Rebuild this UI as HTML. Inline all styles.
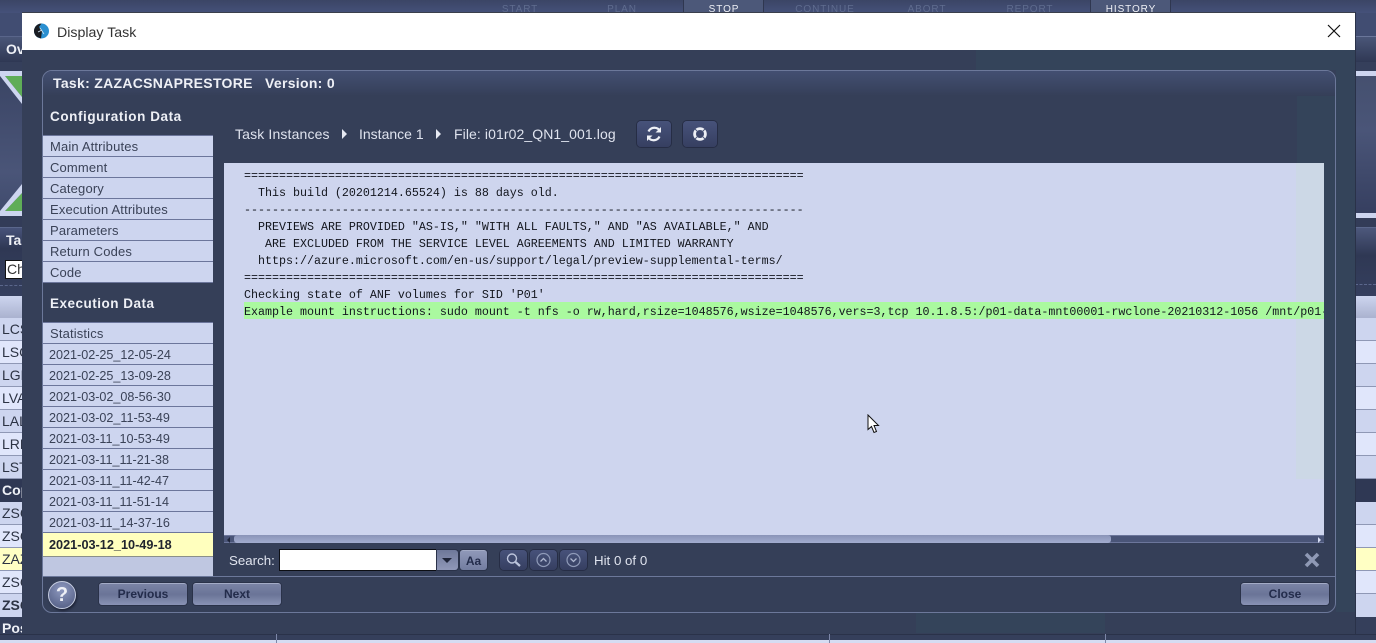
<!DOCTYPE html>
<html>
<head>
<meta charset="utf-8">
<style>
html,body{margin:0;padding:0;width:1376px;height:643px;overflow:hidden;background:#353f5b;}
*{box-sizing:border-box;}
body{position:relative;font-family:"Liberation Sans",sans-serif;}
.a{position:absolute;}
.t{position:absolute;white-space:nowrap;}
.top{font-size:10px;letter-spacing:.9px;color:#5f6c8f;top:4px;line-height:11px;text-align:center;}
.bg-row{position:absolute;height:23px;border-bottom:1px solid #8f98b5;font-size:14px;line-height:22px;color:#2c3344;overflow:hidden;padding-left:2px;}
.nav{position:absolute;left:43px;width:170px;height:21px;background:#cdd5ef;border-bottom:1px solid #6c769b;font-size:13px;line-height:22px;color:#3a4257;padding-left:7px;letter-spacing:.15px;white-space:nowrap;}
.nav.d{font-size:12.6px;letter-spacing:0;padding-left:6px;}
.log{position:absolute;left:244px;font-family:"Liberation Mono",monospace;font-size:11.67px;line-height:17px;height:17px;color:#12151d;white-space:pre;}
.btn{position:absolute;background:linear-gradient(#7a83a5,#6a7497 50%,#8a93b5);border-radius:3px;box-shadow:0 0 0 1px #2a3249;border-top:1px solid #a3abc6;color:#232c4b;font-weight:bold;font-size:12px;text-align:center;line-height:20px;}
.ib{position:absolute;background:linear-gradient(#47527a,#363f61);border-radius:4px;box-shadow:0 0 0 1px #262d45;}
</style>
</head>
<body>
<!-- background app: top bar -->
<div class="a" style="left:0;top:0;width:1376px;height:13px;background:linear-gradient(#3b4565,#45517a);"></div>
<div class="a" style="left:683px;top:0;width:81px;height:13px;background:#4c5879;border-left:1px solid #2f3750;border-right:1px solid #2f3750;"></div>
<div class="a" style="left:1090px;top:0;width:81px;height:13px;background:#4c5879;border-left:1px solid #2f3750;border-right:1px solid #2f3750;"></div>
<div class="t top" style="left:490px;width:60px;">START</div>
<div class="t top" style="left:592px;width:60px;">PLAN</div>
<div class="t top" style="left:694px;width:60px;color:#eef0f6;">STOP</div>
<div class="t top" style="left:795px;width:60px;">CONTINUE</div>
<div class="t top" style="left:897px;width:60px;">ABORT</div>
<div class="t top" style="left:1000px;width:60px;">REPORT</div>
<div class="t top" style="left:1101px;width:60px;color:#eef0f6;">HISTORY</div>

<!-- left strip -->
<div class="a" style="left:0;top:13px;width:22px;height:24px;background:#414d72;"></div>
<div class="a" style="left:0;top:36px;width:22px;height:26px;background:linear-gradient(#4a5678,#2f3854);border-top:1px solid #59658a;"></div>
<div class="t" style="left:6px;top:41px;font-size:14px;font-weight:bold;color:#eef0f6;line-height:16px;width:16px;overflow:hidden;">Ov</div>
<div class="a" style="left:0;top:62px;width:22px;height:9px;background:#353f5b;"></div>
<div class="a" style="left:0;top:71px;width:22px;height:145px;background:linear-gradient(#3a4464,#4a5578 70%,#3f4a6c);"></div>
<svg class="a" style="left:0;top:71px;" width="22" height="145" viewBox="0 0 22 145">
<rect x="0" y="0" width="22" height="5" fill="#cdd5ef"/>
<polygon points="5,5 22,5 22,26" fill="#5fad57"/>
<polygon points="0,5 5,5 22,26 22,33" fill="#cdd5ef"/>
<rect x="0" y="140" width="22" height="5" fill="#cdd5ef"/>
<polygon points="5,140 22,140 22,122" fill="#5fad57"/>
<polygon points="0,140 5,140 22,122 22,113" fill="#cdd5ef"/>
</svg>
<div class="a" style="left:0;top:216px;width:22px;height:11px;background:#333c58;"></div>
<div class="a" style="left:0;top:227px;width:22px;height:69px;background:linear-gradient(#48537a,#2f3854 30%,#353f5e);border-top:1px solid #5b678c;"></div>
<div class="t" style="left:6px;top:232px;font-size:14px;font-weight:bold;color:#eef0f6;line-height:16px;width:16px;overflow:hidden;">Ta</div>
<div class="a" style="left:5px;top:260px;width:17px;height:19px;background:#fff;border:1px solid #111;border-right:0;font-size:14px;line-height:17px;color:#333;padding-left:1px;overflow:hidden;">Ch</div>
<div class="a" style="left:0;top:285px;width:22px;border-top:1px dashed #5b678c;"></div>
<div class="a" style="left:0;top:296px;width:22px;height:22px;background:linear-gradient(#cdd5ef,#aab2cf);"></div>
<div class="bg-row" style="left:0;top:318px;width:22px;background:#cdd5ef;">LCS</div>
<div class="bg-row" style="left:0;top:341px;width:22px;background:#e0e6fb;">LSC</div>
<div class="bg-row" style="left:0;top:364px;width:22px;background:#cdd5ef;">LGR</div>
<div class="bg-row" style="left:0;top:387px;width:22px;background:#e0e6fb;">LVA</div>
<div class="bg-row" style="left:0;top:410px;width:22px;background:#cdd5ef;">LAL</div>
<div class="bg-row" style="left:0;top:433px;width:22px;background:#e0e6fb;">LRE</div>
<div class="bg-row" style="left:0;top:456px;width:22px;background:#cdd5ef;">LST</div>
<div class="bg-row" style="left:0;top:479px;width:22px;background:#2f3854;color:#eef0f6;font-weight:bold;border:0;">Cop</div>
<div class="bg-row" style="left:0;top:502px;width:22px;background:#cdd5ef;">ZSC</div>
<div class="bg-row" style="left:0;top:525px;width:22px;background:#e0e6fb;">ZSC</div>
<div class="bg-row" style="left:0;top:548px;width:22px;background:#ffffc4;">ZAZ</div>
<div class="bg-row" style="left:0;top:571px;width:22px;background:#e0e6fb;">ZSC</div>
<div class="bg-row" style="left:0;top:594px;width:22px;background:#cdd5ef;font-weight:bold;border:0;">ZSC</div>
<div class="t" style="left:2px;top:620px;font-size:14px;font-weight:bold;color:#eef0f6;line-height:16px;width:20px;overflow:hidden;">Pos</div>

<!-- right strip -->
<div class="a" style="left:1355px;top:13px;width:21px;height:23px;background:#414d72;"></div>
<div class="a" style="left:1355px;top:36px;width:21px;height:26px;background:linear-gradient(#4a5678,#2f3854);border-top:1px solid #6a769a;"></div>
<div class="a" style="left:1355px;top:62px;width:21px;height:9px;background:#353f5b;"></div>
<div class="a" style="left:1355px;top:71px;width:21px;height:5px;background:#cdd5ef;"></div>
<div class="a" style="left:1355px;top:76px;width:21px;height:137px;background:linear-gradient(#45506f,#4a5578 40%,#363f60);"></div>
<div class="a" style="left:1355px;top:213px;width:21px;height:5px;background:#cdd5ef;"></div>
<div class="a" style="left:1355px;top:218px;width:21px;height:9px;background:#333c58;"></div>
<div class="a" style="left:1355px;top:227px;width:21px;height:69px;background:linear-gradient(#4d587c,#2f3854 40%,#353f5e);border-top:1px solid #5b678c;"></div>
<div class="a" style="left:1355px;top:284px;width:21px;border-top:1px dashed #5b678c;"></div>
<div class="a" style="left:1355px;top:296px;width:21px;height:22px;background:linear-gradient(#cdd5ef,#aab2cf);"></div>
<div class="bg-row" style="left:1355px;top:318px;width:21px;background:#cdd5ef;"></div>
<div class="bg-row" style="left:1355px;top:341px;width:21px;background:#e0e6fb;"></div>
<div class="bg-row" style="left:1355px;top:364px;width:21px;background:#cdd5ef;"></div>
<div class="bg-row" style="left:1355px;top:387px;width:21px;background:#e0e6fb;"></div>
<div class="bg-row" style="left:1355px;top:410px;width:21px;background:#cdd5ef;"></div>
<div class="bg-row" style="left:1355px;top:433px;width:21px;background:#e0e6fb;"></div>
<div class="bg-row" style="left:1355px;top:456px;width:21px;background:#cdd5ef;"></div>
<div class="a" style="left:1355px;top:479px;width:21px;height:23px;background:#2f3854;"></div>
<div class="bg-row" style="left:1355px;top:502px;width:21px;background:#cdd5ef;"></div>
<div class="bg-row" style="left:1355px;top:525px;width:21px;background:#e0e6fb;"></div>
<div class="bg-row" style="left:1355px;top:548px;width:21px;background:#ffffc4;"></div>
<div class="bg-row" style="left:1355px;top:571px;width:21px;background:#e0e6fb;"></div>
<div class="a" style="left:1355px;top:594px;width:21px;height:23px;background:#cdd5ef;"></div>
<div class="a" style="left:1355px;top:617px;width:21px;height:23px;background:#353f5b;"></div>

<!-- bottom strip -->
<div class="a" style="left:0;top:634px;width:1376px;height:6px;background:#353f5b;border-top:1px solid #2a3249;"></div>
<div class="a" style="left:0;top:640px;width:1376px;height:3px;background:#d5dcf2;"></div>
<div class="a" style="left:276px;top:633px;width:1px;height:10px;background:#7d87a8;"></div>
<div class="a" style="left:829px;top:633px;width:1px;height:10px;background:#7d87a8;"></div>
<div class="a" style="left:1105px;top:633px;width:1px;height:10px;background:#7d87a8;"></div>

<!-- modal -->
<div class="a" style="left:22px;top:50px;width:1333px;height:584px;background:#353f58;"></div>
<div class="a" style="left:976px;top:50px;width:379px;height:20px;background:#34445a;"></div>
<div class="a" style="left:1336px;top:50px;width:19px;height:562px;background:#34445a;"></div>
<div class="a" style="left:916px;top:613px;width:189px;height:20px;background:#34445a;"></div>
<div class="a" style="left:22px;top:13px;width:1333px;height:37px;background:#fff;"></div>
<div class="a" style="left:22px;top:12px;width:1334px;height:1px;background:#3a3f4c;"></div>
<div class="a" style="left:1355px;top:12px;width:1px;height:622px;background:#2a3249;"></div>

<!-- title icon -->
<svg class="a" style="left:33px;top:23px;" width="17" height="16" viewBox="0 0 17 16">
<circle cx="8.500" cy="8" r="7.500" fill="#2a8fd0"/>
<path d="M8.500 .5A7.500 7.500 0 0 0 4 14L8 15.500L9 8L6 4Z" fill="#1a1d22"/>
<path d="M7 5L11 11M5 9L9 7" stroke="#cfe3f2" stroke-width=".8" fill="none"/>
</svg>
<div class="t" style="left:57px;top:24px;font-size:14.2px;line-height:18px;color:#333;">Display Task</div>
<svg class="a" style="left:1327px;top:24px;" width="14" height="14" viewBox="0 0 14 14"><path d="M1 1L13 13M13 1L1 13" stroke="#111" stroke-width="1.200" fill="none"/></svg>

<!-- inner panel -->
<div class="a" style="left:42px;top:70px;width:1294px;height:543px;border:1px solid #6c789a;border-radius:10px;background:#353f58;"></div>
<div class="a" style="left:43px;top:71px;width:1292px;height:25px;border-radius:9px 9px 0 0;background:linear-gradient(#434f72,#353f58);"></div>
<div class="a" style="left:1297px;top:96px;width:38px;height:384px;background:#34445a;"></div>
<div class="t" style="left:53px;top:74px;font-size:14px;line-height:18px;font-weight:bold;color:#eef0f6;letter-spacing:.3px;">Task: ZAZACSNAPRESTORE</div>
<div class="t" style="left:265px;top:74px;font-size:14px;line-height:18px;font-weight:bold;color:#eef0f6;letter-spacing:.3px;">Version: 0</div>

<div class="t" style="left:50px;top:109px;font-size:13.500px;line-height:16px;font-weight:bold;color:#eef0f6;letter-spacing:.57px;">Configuration Data</div>
<div class="a" style="left:43px;top:135px;width:170px;height:1px;background:#6c769b;"></div>
<div class="nav" style="top:136px;">Main Attributes</div>
<div class="nav" style="top:157px;">Comment</div>
<div class="nav" style="top:178px;">Category</div>
<div class="nav" style="top:199px;">Execution Attributes</div>
<div class="nav" style="top:220px;">Parameters</div>
<div class="nav" style="top:241px;">Return Codes</div>
<div class="nav" style="top:262px;">Code</div>
<div class="t" style="left:50px;top:296px;font-size:13.500px;line-height:16px;font-weight:bold;color:#eef0f6;letter-spacing:.5px;">Execution Data</div>
<div class="a" style="left:43px;top:322px;width:170px;height:1px;background:#6c769b;"></div>
<div class="nav" style="top:323px;">Statistics</div>
<div class="nav d" style="top:344px;">2021-02-25_12-05-24</div>
<div class="nav d" style="top:365px;">2021-02-25_13-09-28</div>
<div class="nav d" style="top:386px;">2021-03-02_08-56-30</div>
<div class="nav d" style="top:407px;">2021-03-02_11-53-49</div>
<div class="nav d" style="top:428px;">2021-03-11_10-53-49</div>
<div class="nav d" style="top:449px;">2021-03-11_11-21-38</div>
<div class="nav d" style="top:470px;">2021-03-11_11-42-47</div>
<div class="nav d" style="top:491px;">2021-03-11_11-51-14</div>
<div class="nav d" style="top:512px;">2021-03-11_14-37-16</div>
<div class="nav d" style="top:533px;height:24px;background:#ffffbe;font-weight:bold;color:#20242e;line-height:25px;font-size:12.700px;border-bottom:1px solid #8a8f8a;">2021-03-12_10-49-18</div>
<div class="a" style="left:43px;top:557px;width:170px;height:19px;background:#bfc7e1;"></div>

<!-- breadcrumb -->
<div class="t" style="left:235px;top:125px;font-size:14px;line-height:18px;color:#dfe3ee;letter-spacing:.15px;">Task Instances</div>
<div class="a" style="left:342px;top:129px;width:0;height:0;border-left:5px solid #e6e9f2;border-top:5px solid transparent;border-bottom:5px solid transparent;"></div>
<div class="t" style="left:359px;top:125px;font-size:14px;line-height:18px;color:#dfe3ee;">Instance 1</div>
<div class="a" style="left:436px;top:129px;width:0;height:0;border-left:5px solid #e6e9f2;border-top:5px solid transparent;border-bottom:5px solid transparent;"></div>
<div class="t" style="left:454px;top:125px;font-size:14px;line-height:18px;color:#dfe3ee;letter-spacing:.09px;">File: i01r02_QN1_001.log</div>

<div class="ib" style="left:637px;top:121px;width:34px;height:26px;"></div>
<svg class="a" style="left:645px;top:125px;" width="18" height="18" viewBox="0 0 18 18"><path d="M15 6A6.500 6.500 0 0 0 3.500 6.500M3 12A6.500 6.500 0 0 0 14.500 11.500" stroke="#eef0f6" stroke-width="2.200" fill="none"/><path d="M16 2V7.500H10.500ZM2 16V10.500H7.500Z" fill="#eef0f6"/></svg>
<div class="ib" style="left:683px;top:121px;width:34px;height:26px;"></div>
<svg class="a" style="left:691px;top:125px;" width="18" height="18" viewBox="0 0 18 18"><circle cx="9" cy="9" r="5.400" stroke="#eef0f6" stroke-width="2.800" fill="none"/><path d="M3.800 3.800L7 7M14.200 3.800L11 7M3.800 14.200L7 11M14.200 14.200L11 11" stroke="#4a5578" stroke-width="1"/></svg>

<!-- log area -->
<div class="a" style="left:224px;top:163px;width:1100px;height:372px;background:#ced5ee;"></div>
<div class="a" style="left:1296px;top:163px;width:28px;height:316px;background:#ccd8e6;"></div>
<div class="a" style="left:244px;top:302px;width:1080px;height:17px;background:#aaf99f;"></div>
<div class="log" style="top:168px;">================================================================================</div>
<div class="log" style="top:185px;">  This build (20201214.65524) is 88 days old.</div>
<div class="log" style="top:202px;">--------------------------------------------------------------------------------</div>
<div class="log" style="top:219px;">  PREVIEWS ARE PROVIDED "AS-IS," "WITH ALL FAULTS," AND "AS AVAILABLE," AND</div>
<div class="log" style="top:236px;">   ARE EXCLUDED FROM THE SERVICE LEVEL AGREEMENTS AND LIMITED WARRANTY</div>
<div class="log" style="top:253px;">  https://azure.microsoft.com/en-us/support/legal/preview-supplemental-terms/</div>
<div class="log" style="top:270px;">================================================================================</div>
<div class="log" style="top:287px;">Checking state of ANF volumes for SID 'P01'</div>
<div class="log" style="top:304px;width:1080px;overflow:hidden;">Example mount instructions: sudo mount -t nfs -o rw,hard,rsize=1048576,wsize=1048576,vers=3,tcp 10.1.8.5:/p01-data-mnt00001-rwclone-20210312-1056 /mnt/p01-data</div>

<!-- cursor -->
<svg class="a" style="left:867px;top:414px;" width="14" height="20" viewBox="0 0 14 20"><path d="M1 1V15.500L4.500 12.500L7 18.500L9.500 17.500L7 11.500H11.500Z" fill="#fff" stroke="#111" stroke-width="1"/></svg>

<!-- hscroll -->
<div class="a" style="left:224px;top:535px;width:1100px;height:8px;background:#4a5578;border-top:1px solid #6c769b;border-bottom:1px solid #6c769b;"></div>
<div class="a" style="left:234px;top:535px;width:877px;height:8px;border-radius:3px;background:linear-gradient(#8a94b8,#a3add0);"></div>
<div class="a" style="left:227px;top:537px;width:0;height:0;border-right:3px solid #1e2438;border-top:3px solid transparent;border-bottom:3px solid transparent;"></div>
<div class="a" style="left:1318px;top:537px;width:0;height:0;border-left:3px solid #d5dcf2;border-top:3px solid transparent;border-bottom:3px solid transparent;"></div>

<!-- search row -->
<div class="t" style="left:229px;top:553px;font-size:13.300px;line-height:16px;color:#dfe3ee;">Search:</div>
<div class="a" style="left:279px;top:549px;width:158px;height:22px;background:#fff;border:1px solid #0c0e14;"></div>
<div class="a" style="left:437px;top:550px;width:21px;height:20px;background:linear-gradient(#6e7899,#9098b8);border-radius:0 3px 3px 0;box-shadow:0 0 0 1px #2a3249;"></div>
<div class="a" style="left:442px;top:558px;width:0;height:0;border-top:5px solid #1e2438;border-left:5px solid transparent;border-right:5px solid transparent;"></div>
<div class="btn" style="left:460px;top:550px;width:27px;height:20px;font-size:12px;line-height:20px;background:linear-gradient(#8f98b8,#737da0);">Aa</div>
<div class="ib" style="left:500px;top:550px;width:27px;height:20px;"></div>
<svg class="a" style="left:505px;top:552px;" width="17" height="16" viewBox="0 0 17 16"><circle cx="7" cy="6.500" r="4.500" stroke="#bcc4dc" stroke-width="1.400" fill="none"/><path d="M10.500 10L15 14" stroke="#bcc4dc" stroke-width="2.200"/></svg>
<div class="ib" style="left:530px;top:550px;width:27px;height:20px;"></div>
<svg class="a" style="left:535px;top:552px;" width="17" height="16" viewBox="0 0 17 16"><circle cx="8.500" cy="8" r="6.500" stroke="#8f9ab8" stroke-width="1.200" fill="none"/><path d="M5.500 9.500L8.500 6.500L11.500 9.500" stroke="#aeb7d0" stroke-width="1.300" fill="none"/></svg>
<div class="ib" style="left:560px;top:550px;width:27px;height:20px;"></div>
<svg class="a" style="left:565px;top:552px;" width="17" height="16" viewBox="0 0 17 16"><circle cx="8.500" cy="8" r="6.500" stroke="#8f9ab8" stroke-width="1.200" fill="none"/><path d="M5.500 6.500L8.500 9.500L11.500 6.500" stroke="#aeb7d0" stroke-width="1.300" fill="none"/></svg>
<div class="t" style="left:594px;top:553px;font-size:13.300px;line-height:16px;color:#dfe3ee;">Hit 0 of 0</div>
<svg class="a" style="left:1304px;top:552px;" width="16" height="16" viewBox="0 0 16 16"><path d="M2 2L14 14M14 2L2 14" stroke="#8f99b5" stroke-width="3.600" fill="none"/></svg>

<!-- footer -->
<div class="a" style="left:43px;top:576px;width:1292px;height:1px;background:#6c789a;"></div>
<div class="a" style="left:48px;top:581px;width:28px;height:28px;border-radius:50%;background:radial-gradient(circle at 50% 30%,#8e99c0,#5d688e 75%);border:1px solid #c5cce0;box-shadow:1px 2px 2px #1e2438;color:#eef0f6;font-size:20px;font-weight:bold;line-height:26px;text-align:center;">?</div>
<div class="btn" style="left:99px;top:583px;width:88px;height:22px;">Previous</div>
<div class="btn" style="left:193px;top:583px;width:88px;height:22px;">Next</div>
<div class="btn" style="left:1241px;top:583px;width:88px;height:22px;">Close</div>
</body>
</html>
